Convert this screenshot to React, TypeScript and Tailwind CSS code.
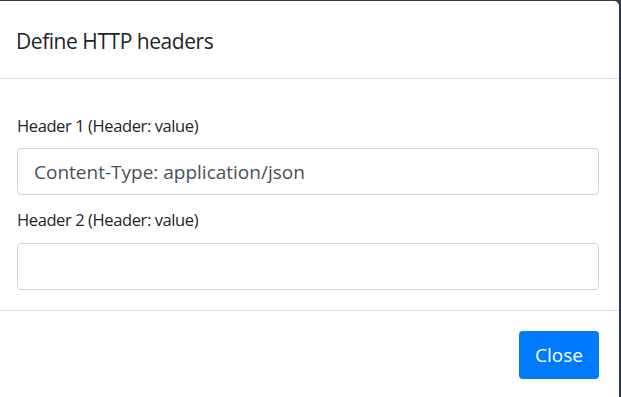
import React from 'react';

const font = { fontFamily: '"Segoe UI", "Open Sans", "Noto Sans", sans-serif' };

export default function App() {
  return (
    <div className="w-[621px] h-[397px] bg-[#2f3b4c] pt-px pr-[2px] overflow-hidden" style={font}>
      <div className="h-full bg-white rounded-tr-[5px] text-[#212529] flex flex-col">
        <div className="h-[78px] border-b border-[#dee2e6] flex items-center px-4 pt-1">
          <h5 className="text-[21px] font-medium leading-none tracking-[-0.45px]">Define HTTP headers</h5>
        </div>
        <div className="pl-[17px] pr-5 pt-[35px] pb-5">
          <label className="block text-[16.5px] leading-6 mb-[10px] tracking-[-0.4px]">Header 1 (Header: value)</label>
          <input
            readOnly
            value="Content-Type: application/json"
            className="w-full h-[47px] border border-[#ced4da] rounded-[4px] px-4 text-[19px] text-[#495057] outline-none"
          />
          <label className="block text-[16.5px] leading-6 mt-[13px] mb-[11px] tracking-[-0.4px]">Header 2 (Header: value)</label>
          <input
            readOnly
            value=""
            className="w-full h-[47px] border border-[#ced4da] rounded-[4px] px-4 text-[19px] text-[#495057] outline-none"
          />
        </div>
        <div className="border-t border-[#dee2e6] flex justify-end px-5 pt-5">
          <button className="w-20 h-12 bg-[#007bff] text-white text-[19px] rounded-[4px]">Close</button>
        </div>
      </div>
    </div>
  );
}
